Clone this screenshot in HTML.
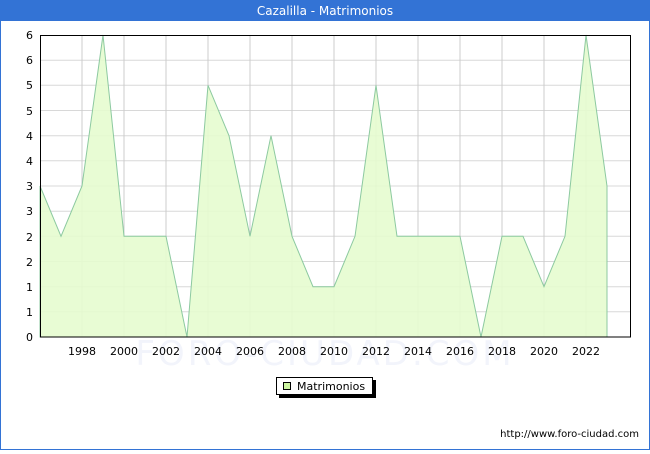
<!DOCTYPE html>
<html><head><meta charset="utf-8"><style>
body{margin:0;width:650px;height:450px;overflow:hidden;background:#fff;font-family:"DejaVu Sans","Liberation Sans",sans-serif}
</style></head><body>
<svg width="650" height="450" xmlns="http://www.w3.org/2000/svg" font-family="DejaVu Sans, Liberation Sans, sans-serif">
<rect x="0.5" y="0.5" width="649" height="449" fill="#fff" stroke="#3373d5"/>
<rect x="0" y="0" width="650" height="21" fill="#3373d5"/>
<text x="325" y="15" fill="#fff" font-size="12" text-anchor="middle">Cazalilla - Matrimonios</text>
<text x="325" y="365" fill="#f2f4fb" font-size="34" text-anchor="middle" letter-spacing="3">FORO-CIUDAD.COM</text>
<g stroke="#d8d8d8" stroke-width="1">
<line x1="40" x2="631" y1="311.8" y2="311.8"/><line x1="40" x2="631" y1="286.7" y2="286.7"/>
<line x1="40" x2="631" y1="261.5" y2="261.5"/><line x1="40" x2="631" y1="236.3" y2="236.3"/>
<line x1="40" x2="631" y1="211.2" y2="211.2"/><line x1="40" x2="631" y1="186" y2="186"/>
<line x1="40" x2="631" y1="160.8" y2="160.8"/><line x1="40" x2="631" y1="135.7" y2="135.7"/>
<line x1="40" x2="631" y1="110.5" y2="110.5"/><line x1="40" x2="631" y1="85.3" y2="85.3"/>
<line x1="40" x2="631" y1="60.2" y2="60.2"/>
</g>
<g stroke="#cccccc">
<line x1="82" x2="82" y1="35" y2="337"/><line x1="124" x2="124" y1="35" y2="337"/>
<line x1="166" x2="166" y1="35" y2="337"/><line x1="208" x2="208" y1="35" y2="337"/>
<line x1="250" x2="250" y1="35" y2="337"/><line x1="292" x2="292" y1="35" y2="337"/>
<line x1="334" x2="334" y1="35" y2="337"/><line x1="376" x2="376" y1="35" y2="337"/>
<line x1="418" x2="418" y1="35" y2="337"/><line x1="460" x2="460" y1="35" y2="337"/>
<line x1="502" x2="502" y1="35" y2="337"/><line x1="544" x2="544" y1="35" y2="337"/>
<line x1="586" x2="586" y1="35" y2="337"/>
</g>
<polygon fill="#e6fccf" fill-opacity="0.9" stroke="#8cc9a0" stroke-width="1" points="40,337 40,186 61,236.3 82,186 103,35 124,236.3 145,236.3 166,236.3 187,337 208,85.3 229,135.7 250,236.3 271,135.7 292,236.3 313,286.7 334,286.7 355,236.3 376,85.3 397,236.3 418,236.3 439,236.3 460,236.3 481,337 502,236.3 523,236.3 544,286.7 565,236.3 586,35 607,186 607,337"/>
<rect x="40.5" y="35.5" width="590" height="301.5" fill="none" stroke="#000"/>
<g font-size="11" fill="#000" text-anchor="end">
<text x="33" y="341">0</text><text x="33" y="316">1</text><text x="33" y="291">1</text>
<text x="33" y="266">2</text><text x="33" y="241">2</text><text x="33" y="215">3</text>
<text x="33" y="190">3</text><text x="33" y="165">4</text><text x="33" y="140">4</text>
<text x="33" y="115">5</text><text x="33" y="89">5</text><text x="33" y="64">6</text><text x="33" y="39">6</text>
</g>
<g font-size="11" fill="#000" text-anchor="middle">
<text x="82" y="355">1998</text><text x="124" y="355">2000</text><text x="166" y="355">2002</text>
<text x="208" y="355">2004</text><text x="250" y="355">2006</text><text x="292" y="355">2008</text>
<text x="334" y="355">2010</text><text x="376" y="355">2012</text><text x="418" y="355">2014</text>
<text x="460" y="355">2016</text><text x="502" y="355">2018</text><text x="544" y="355">2020</text>
<text x="586" y="355">2022</text>
</g>
<rect x="279" y="380" width="97" height="18" fill="#000"/>
<rect x="276.5" y="377.5" width="96" height="17" fill="#fff" stroke="#000"/>
<rect x="283.5" y="382.5" width="7" height="7" fill="#ccf5a0" stroke="#000"/>
<text x="297" y="390" font-size="11">Matrimonios</text>
<text x="639" y="437" font-size="10" text-anchor="end">http://www.foro-ciudad.com</text>
</svg>
</body></html>
